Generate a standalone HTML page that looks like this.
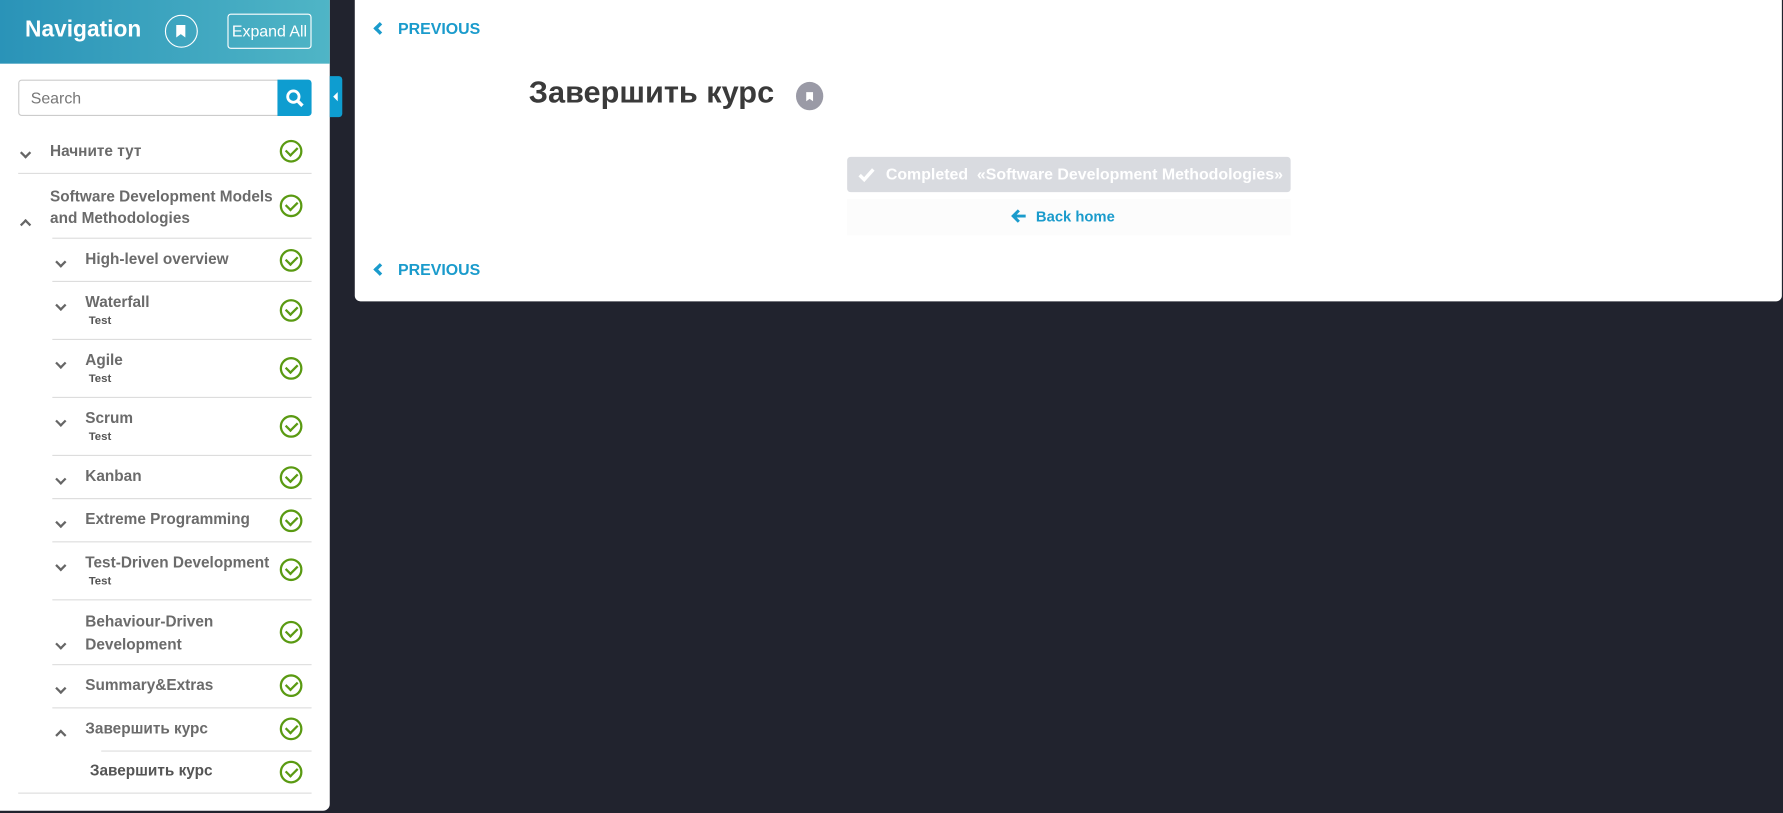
<!DOCTYPE html>
<html><head><meta charset="utf-8"><style>
*{margin:0;padding:0;box-sizing:border-box}
body{width:1783px;height:813px;background:#21232e;font-family:"Liberation Sans","Noto Sans CJK SC",sans-serif;overflow:hidden}
#w{position:absolute;left:0;top:0;width:1568px;height:715px;transform:scale(1.13712);transform-origin:0 0}
.abs{position:absolute}
#side{left:0;top:0;width:290px;height:713px;background:#fff;border-radius:0 0 6px 0}
#hdr{left:0;top:0;width:290px;height:56px;background:linear-gradient(90deg,#2a93b8,#4fb5c6)}
.t{position:absolute;color:#6b6b6b;font-weight:bold;font-size:13.5px;white-space:nowrap}
.s{position:absolute;color:#555;font-weight:bold;font-size:10px}
.ln{position:absolute;height:1px;background:#ddd}
.chk{position:absolute;left:246px;width:20px;height:20px;border:2px solid #5a9a12;border-radius:50%}
.chk:after{content:"";position:absolute;left:5px;top:2px;width:5px;height:8px;border:solid #5a9a12;border-width:0 2.5px 2.5px 0;transform:rotate(45deg)}
.cv{position:absolute;width:7px;height:7px;border:solid #666;border-width:0 2px 2px 0;transform:rotate(45deg)}
.cu{position:absolute;width:7px;height:7px;border:solid #666;border-width:2px 0 0 2px;transform:rotate(45deg)}
.blue{color:#1a9bcc;font-weight:bold;font-size:14px}
</style></head><body><div id="w">
<div id="side" class="abs"></div>
<div id="hdr" class="abs"></div>
<div class="abs" style="left:22px;top:15px;color:#fff;font-weight:bold;font-size:20px">Navigation</div>
<div class="abs" style="left:145px;top:13px;width:29px;height:29px;border:1.5px solid #fff;border-radius:50%"><svg width="26" height="26" viewBox="0 0 26 26"><path d="M9 8h8v11l-4-3-4 3z" fill="#fff"/></svg></div>
<div class="abs" style="left:200px;top:12px;width:74px;height:31px;border:1.5px solid #fff;border-radius:3px;color:#fff;font-size:14px;line-height:28px;text-align:center">Expand All</div>
<div class="abs" style="left:16px;top:70px;width:229px;height:32px;border:1px solid #ccc;border-radius:3px 0 0 3px;color:#777;font-size:14px;line-height:30px;padding-left:10px">Search</div>
<div class="abs" style="left:244px;top:70px;width:30px;height:32px;background:#0e9dd0;border-radius:0 3px 3px 0"><svg width="30" height="32"><circle cx="14" cy="15" r="5" stroke="#fff" stroke-width="2.5" fill="none"/><path d="M18 19l4 4" stroke="#fff" stroke-width="3"/></svg></div>
<div class="abs" style="left:290px;top:67px;width:11px;height:36px;background:#0e9dd0;border-radius:0 3px 3px 0"><svg width="11" height="36"><path d="M7 14v8l-4-4z" fill="#fff"/></svg></div>

<div class="cv" style="left:19px;top:131px"></div><div class="t" style="left:44px;top:125px">Начните тут</div><div class="chk" style="top:123px"></div>
<div class="ln" style="left:16px;width:258px;top:152px"></div>
<div class="cu" style="left:19px;top:194px"></div><div class="t" style="left:44px;top:163px;line-height:19px">Software Development Models<br>and Methodologies</div><div class="chk" style="top:171px"></div>
<div class="ln" style="left:46px;width:228px;top:209px"></div>

<div class="cv" style="left:50px;top:227px"></div><div class="t" style="left:75px;top:220px">High-level overview</div><div class="chk" style="top:219px"></div>
<div class="ln" style="left:46px;width:228px;top:247px"></div>
<div class="cv" style="left:50px;top:265px"></div><div class="t" style="left:75px;top:258px">Waterfall</div><div class="s" style="left:78px;top:277px">Test</div><div class="chk" style="top:263px"></div>
<div class="ln" style="left:46px;width:228px;top:298px"></div>
<div class="cv" style="left:50px;top:316px"></div><div class="t" style="left:75px;top:309px">Agile</div><div class="s" style="left:78px;top:328px">Test</div><div class="chk" style="top:314px"></div>
<div class="ln" style="left:46px;width:228px;top:349px"></div>
<div class="cv" style="left:50px;top:367px"></div><div class="t" style="left:75px;top:360px">Scrum</div><div class="s" style="left:78px;top:379px">Test</div><div class="chk" style="top:365px"></div>
<div class="ln" style="left:46px;width:228px;top:400px"></div>
<div class="cv" style="left:50px;top:418px"></div><div class="t" style="left:75px;top:411px">Kanban</div><div class="chk" style="top:410px"></div>
<div class="ln" style="left:46px;width:228px;top:438px"></div>
<div class="cv" style="left:50px;top:456px"></div><div class="t" style="left:75px;top:449px">Extreme Programming</div><div class="chk" style="top:448px"></div>
<div class="ln" style="left:46px;width:228px;top:476px"></div>
<div class="cv" style="left:50px;top:494px"></div><div class="t" style="left:75px;top:487px">Test-Driven Development</div><div class="s" style="left:78px;top:506px">Test</div><div class="chk" style="top:491px"></div>
<div class="ln" style="left:46px;width:228px;top:527px"></div>
<div class="cv" style="left:50px;top:563px"></div><div class="t" style="left:75px;top:537px;line-height:20px">Behaviour-Driven<br>Development</div><div class="chk" style="top:546px"></div>
<div class="ln" style="left:46px;width:228px;top:584px"></div>
<div class="cv" style="left:50px;top:602px"></div><div class="t" style="left:75px;top:595px">Summary&amp;Extras</div><div class="chk" style="top:593px"></div>
<div class="ln" style="left:46px;width:228px;top:622px"></div>
<div class="cu" style="left:50px;top:643px"></div><div class="t" style="left:75px;top:633px">Завершить курс</div><div class="chk" style="top:631px"></div>
<div class="ln" style="left:89px;width:185px;top:660px"></div>
<div class="t" style="left:79px;top:670px;color:#555">Завершить курс</div><div class="chk" style="top:669px"></div>
<div class="ln" style="left:16px;width:258px;top:697px"></div>

<div class="abs" style="left:312px;top:0;width:1255px;height:265px;background:#fff;border-radius:0 0 5px 5px"></div>
<div class="abs blue" style="left:330px;top:17px"><span style="display:inline-block;width:8px;height:8px;border:solid #1a9bcc;border-width:0 0 3px 3px;transform:rotate(45deg);margin-right:12px;position:relative;top:-1px"></span>PREVIOUS</div>
<div class="abs blue" style="left:330px;top:229px"><span style="display:inline-block;width:8px;height:8px;border:solid #1a9bcc;border-width:0 0 3px 3px;transform:rotate(45deg);margin-right:12px;position:relative;top:-1px"></span>PREVIOUS</div>
<div class="abs" style="left:465px;top:66px;font-size:27px;font-weight:bold;color:#3a3a3a">Завершить курс</div>
<div class="abs" style="left:700px;top:72px;width:24px;height:25px;background:#9a9aa6;border-radius:50%"><svg width="24" height="25"><path d="M9 9h6v8l-3-2-3 2z" fill="#fff"/></svg></div>
<div class="abs" style="left:745px;top:138px;width:390px;height:31px;background:#d9dbe0;border-radius:3px;color:#fff;font-weight:bold;font-size:14px;line-height:31px;padding-left:34px">Completed&nbsp; «Software Development Methodologies»</div>
<svg class="abs" style="left:754px;top:147px" width="16" height="14"><path d="M2 7l4 4 8-9" stroke="#fff" stroke-width="3" fill="none"/></svg>
<div class="abs" style="left:745px;top:175px;width:390px;height:32px;background:#fcfcfc"></div>
<div class="abs blue" style="left:889px;top:183px;font-size:13px"><svg width="14" height="14" style="vertical-align:-2px;margin-right:8px"><path d="M7 2L2 7l5 5M2 7h11" stroke="#1a9bcc" stroke-width="2.6" fill="none"/></svg>Back home</div>
</div></body></html>
